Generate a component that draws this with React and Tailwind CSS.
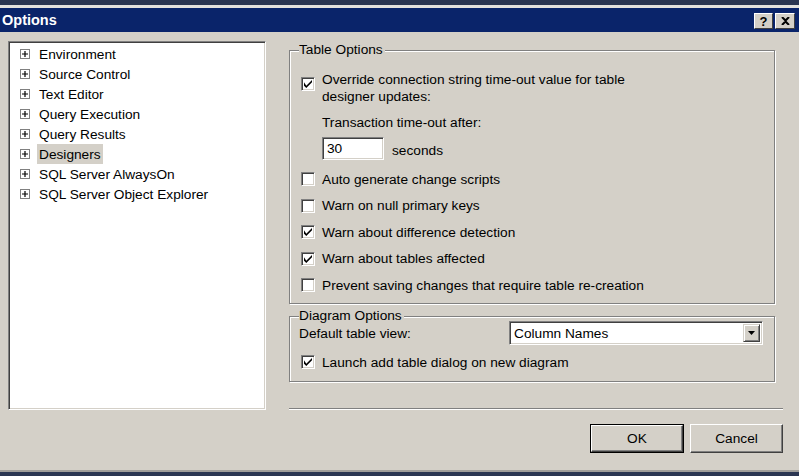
import React from 'react'

const treeItems = [
  'Environment',
  'Source Control',
  'Text Editor',
  'Query Execution',
  'Query Results',
  'Designers',
  'SQL Server AlwaysOn',
  'SQL Server Object Explorer',
]

function PlusBox() {
  return (
    <span className="w-[10px] h-[10px] border border-[#808080] bg-white flex items-center justify-center shrink-0">
      <svg width="6" height="6" viewBox="0 0 6 6">
        <path d="M0 3h6M3 0v6" stroke="#000" strokeWidth="1.2" />
      </svg>
    </span>
  )
}

function Checkbox({ checked }) {
  return (
    <span className="w-[14px] h-[14px] shrink-0 border border-[#808080] border-b-white border-r-white bg-white shadow-[inset_1px_1px_0_#404040,inset_-1px_-1px_0_#d4d0c8] flex items-center justify-center">
      {checked && (
        <svg width="8" height="8" viewBox="0 0 7 7">
          <path d="M0 2v3l2 2l5-5V0L2 5z" fill="#000" />
        </svg>
      )}
    </span>
  )
}

function CheckRow({ checked, children }) {
  return (
    <div className="flex items-center gap-[7px] h-[26.5px]">
      <Checkbox checked={checked} />
      <span>{children}</span>
    </div>
  )
}

function Group({ title, className, children }) {
  return (
    <div className={`relative border border-[#808080] shadow-[1px_1px_0_#fff,inset_1px_1px_0_#fff] ${className}`}>
      <span className="absolute left-[9px] top-[-9px] bg-[#d4d0c8] pr-[2px] leading-[16px]">{title}</span>
      {children}
    </div>
  )
}

function Button({ children, isDefault }) {
  return (
    <div className={`h-[29px] ${isDefault ? 'w-[94px] border border-black' : 'w-[93px]'}`}>
      <div className="w-full h-full border border-white border-b-[#404040] border-r-[#404040] shadow-[inset_-1px_-1px_0_#808080] flex items-center justify-center">
        {children}
      </div>
    </div>
  )
}

export default function App() {
  return (
    <div className="w-[799px] h-[476px] bg-[#d4d0c8] flex flex-col text-[13.7px] leading-[17px] text-black overflow-hidden" style={{ fontFamily: '"Liberation Sans", Arial, sans-serif' }}>
      <div className="h-[5px] bg-[#2b3652]" />
      <div className="h-[3px] bg-[#e4e2de]" />
      <div className="h-[24px] bg-[#0a246a] flex items-center justify-between pl-[2px] pr-[4px]">
        <span className="text-white font-bold text-[14.5px]">Options</span>
        <div className="flex gap-[2px] mt-[2px]">
          <div className="w-[19px] h-[16px] border border-white border-b-[#404040] border-r-[#404040] bg-[#d4d0c8] flex items-center justify-center font-bold text-[13px] leading-none">?</div>
          <div className="w-[20px] h-[16px] border border-white border-b-[#404040] border-r-[#404040] bg-[#d4d0c8] flex items-center justify-center">
            <svg width="9" height="8" viewBox="0 0 9 8">
              <path d="M1 0L4.5 3.5L8 0M1 8L4.5 4.5L8 8" stroke="#000" strokeWidth="2" fill="none" />
            </svg>
          </div>
        </div>
      </div>

      <div className="flex-1 flex pl-[8px] pt-[9px]">
        <div className="w-[258px] h-[369px] border border-[#808080] border-b-white border-r-white bg-white shadow-[inset_1px_1px_0_#404040,inset_-1px_-1px_0_#d4d0c8] pt-[2px]">
          {treeItems.map((item) => (
            <div key={item} className="flex items-center h-[20px] pl-[11px]">
              <PlusBox />
              <span className={`ml-[7px] px-[2px] h-[20px] flex items-center ${item === 'Designers' ? 'bg-[#d4d0c8]' : ''}`}>{item}</span>
            </div>
          ))}
        </div>

        <div className="ml-[23px] w-[494px] flex flex-col pt-[9px]">
          <Group title="Table Options" className="w-[486px] h-[254px] pl-[11px] pt-[20px]">
            <div className="flex items-start gap-[7px]">
              <span className="mt-[6px]"><Checkbox checked /></span>
              <div>
                <div>Override connection string time-out value for table</div>
                <div>designer updates:</div>
                <div className="mt-[9px]">Transaction time-out after:</div>
                <div className="flex items-center mt-[6px]">
                  <div className="w-[62px] h-[23px] border border-[#808080] border-b-white border-r-white bg-white shadow-[inset_1px_1px_0_#404040,inset_-1px_-1px_0_#d4d0c8] flex items-center pl-[4px]">30</div>
                  <span className="ml-[8px] mt-[3px]">seconds</span>
                </div>
              </div>
            </div>
            <div className="mt-[6px]">
              <CheckRow>Auto generate change scripts</CheckRow>
              <CheckRow>Warn on null primary keys</CheckRow>
              <CheckRow checked>Warn about difference detection</CheckRow>
              <CheckRow checked>Warn about tables affected</CheckRow>
              <CheckRow>Prevent saving changes that require table re-creation</CheckRow>
            </div>
          </Group>

          <Group title="Diagram Options" className="w-[486px] h-[66px] mt-[12px] pl-[9px] pr-[11px] pt-[4px]">
            <div className="flex items-center justify-between h-[24px]">
              <span>Default table view:</span>
              <div className="w-[254px] h-[24px] border border-[#808080] border-b-white border-r-white bg-white shadow-[inset_1px_1px_0_#404040,inset_-1px_-1px_0_#d4d0c8] flex items-center p-[2px]">
                <span className="flex-1 pl-[2px]">Column Names</span>
                <div className="w-[17px] h-[18px] bg-[#d4d0c8] border border-[#d4d0c8] border-b-[#404040] border-r-[#404040] shadow-[inset_1px_1px_0_#fff,inset_-1px_-1px_0_#808080] flex items-center justify-center">
                  <svg width="7" height="4" viewBox="0 0 7 4">
                    <path d="M0 0h7L3.5 4z" fill="#000" />
                  </svg>
                </div>
              </div>
            </div>
            <div className="mt-[4px] ml-[2px]">
              <CheckRow checked>Launch add table dialog on new diagram</CheckRow>
            </div>
          </Group>

          <div className="mt-[26px] h-[2px] border-t border-[#808080] border-b border-b-white" />

          <div className="mt-[14px] flex justify-end gap-[6px]">
            <Button isDefault>OK</Button>
            <Button>Cancel</Button>
          </div>
        </div>
      </div>

      <div className="h-[2px] bg-[#a09e9a]" />
      <div className="h-[4px] bg-[#2b3652]" />
    </div>
  )
}
